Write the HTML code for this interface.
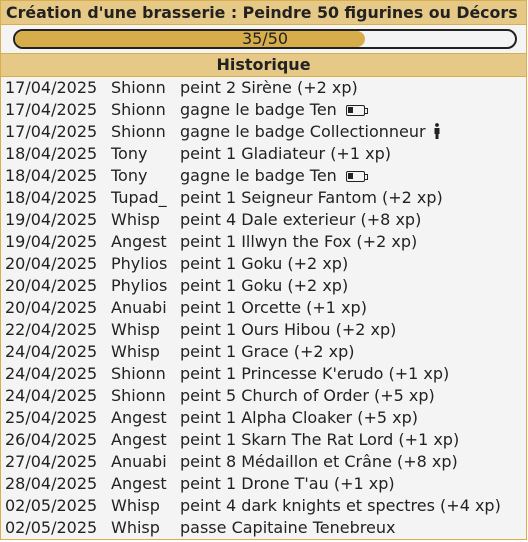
<!DOCTYPE html>
<html><head><meta charset="utf-8"><style>
body{margin:0;background:#fff;font-family:"DejaVu Sans","Liberation Sans",sans-serif;color:#222;}
.box{position:absolute;left:0;top:0;width:525px;height:538px;border:1px solid #d9ae4c;background:#f4f4f4;}
.hdr{height:23px;background:#e6c987;border-bottom:1px solid #d9ae4c;font-weight:bold;font-size:15.8px;line-height:23px;padding-left:5px;white-space:nowrap;overflow:hidden;}
.pr{height:28px;border-bottom:1px solid #d9ae4c;position:relative;}
.bar{position:absolute;left:12px;top:4px;width:500px;height:16px;border:2px solid #222;border-radius:10px;overflow:hidden;background:#f4f4f4;}
.fill{position:absolute;left:0;top:0;bottom:0;width:350px;background:#d6ad4a;border-radius:0 8px 8px 0;}
.bt{position:absolute;left:0;right:0;top:0;text-align:center;font-size:16px;line-height:16px;}
.h2{height:22px;background:#e6c987;border-bottom:1px solid #d9ae4c;font-weight:bold;font-size:16px;line-height:22px;text-align:center;}
.r{height:22px;font-size:16px;line-height:22px;position:relative;white-space:nowrap;}
.r span{position:absolute;top:0}
.d{left:4px}.n{left:110px}.a{left:179px}
.bat{display:inline-block;width:19px;height:11px;border:1.5px solid #222;border-radius:2px;position:relative;vertical-align:-1px;margin-left:4px;box-sizing:border-box;}
.bat:before{content:"";position:absolute;left:1px;top:1px;width:5px;height:6px;background:#222}
.bat:after{content:"";position:absolute;right:-4px;top:2px;width:2px;height:4px;border:1px solid #222;border-left:none}
</style></head><body>
<div class="box">
<div class="hdr">Création d'une brasserie : Peindre 50 figurines ou Décors</div>
<div class="pr"><div class="bar"><div class="fill"></div><div class="bt">35/50</div></div></div>
<div class="h2">Historique</div>
<div class="r"><span class="d">17/04/2025</span><span class="n">Shionn</span><span class="a">peint 2 Sirène (+2 xp)</span></div>
<div class="r"><span class="d">17/04/2025</span><span class="n">Shionn</span><span class="a">gagne le badge Ten <i class="bat"></i></span></div>
<div class="r"><span class="d">17/04/2025</span><span class="n">Shionn</span><span class="a">gagne le badge Collectionneur <svg width="8" height="16" viewBox="0 0 8 16" style="vertical-align:-2px;margin-left:2px"><circle cx="4" cy="2" r="1.9" fill="#222"/><path d="M1.5 5h5v6h-1v5h-3v-5h-1z" fill="#222"/></svg></span></div>
<div class="r"><span class="d">18/04/2025</span><span class="n">Tony</span><span class="a">peint 1 Gladiateur (+1 xp)</span></div>
<div class="r"><span class="d">18/04/2025</span><span class="n">Tony</span><span class="a">gagne le badge Ten <i class="bat"></i></span></div>
<div class="r"><span class="d">18/04/2025</span><span class="n">Tupad_</span><span class="a">peint 1 Seigneur Fantom (+2 xp)</span></div>
<div class="r"><span class="d">19/04/2025</span><span class="n">Whisp</span><span class="a">peint 4 Dale exterieur (+8 xp)</span></div>
<div class="r"><span class="d">19/04/2025</span><span class="n">Angest</span><span class="a">peint 1 Illwyn the Fox (+2 xp)</span></div>
<div class="r"><span class="d">20/04/2025</span><span class="n">Phylios</span><span class="a">peint 1 Goku (+2 xp)</span></div>
<div class="r"><span class="d">20/04/2025</span><span class="n">Phylios</span><span class="a">peint 1 Goku (+2 xp)</span></div>
<div class="r"><span class="d">20/04/2025</span><span class="n">Anuabi</span><span class="a">peint 1 Orcette (+1 xp)</span></div>
<div class="r"><span class="d">22/04/2025</span><span class="n">Whisp</span><span class="a">peint 1 Ours Hibou (+2 xp)</span></div>
<div class="r"><span class="d">24/04/2025</span><span class="n">Whisp</span><span class="a">peint 1 Grace (+2 xp)</span></div>
<div class="r"><span class="d">24/04/2025</span><span class="n">Shionn</span><span class="a">peint 1 Princesse K'erudo (+1 xp)</span></div>
<div class="r"><span class="d">24/04/2025</span><span class="n">Shionn</span><span class="a">peint 5 Church of Order (+5 xp)</span></div>
<div class="r"><span class="d">25/04/2025</span><span class="n">Angest</span><span class="a">peint 1 Alpha Cloaker (+5 xp)</span></div>
<div class="r"><span class="d">26/04/2025</span><span class="n">Angest</span><span class="a">peint 1 Skarn The Rat Lord (+1 xp)</span></div>
<div class="r"><span class="d">27/04/2025</span><span class="n">Anuabi</span><span class="a">peint 8 Médaillon et Crâne (+8 xp)</span></div>
<div class="r"><span class="d">28/04/2025</span><span class="n">Angest</span><span class="a">peint 1 Drone T'au (+1 xp)</span></div>
<div class="r"><span class="d">02/05/2025</span><span class="n">Whisp</span><span class="a">peint 4 dark knights et spectres (+4 xp)</span></div>
<div class="r"><span class="d">02/05/2025</span><span class="n">Whisp</span><span class="a">passe Capitaine Tenebreux</span></div>
</div>
</body></html>
